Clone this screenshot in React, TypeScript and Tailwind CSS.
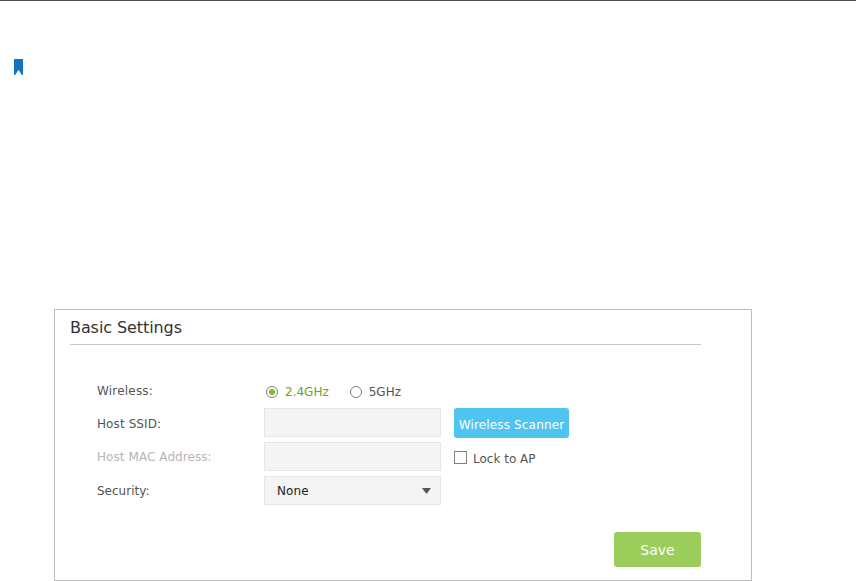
export default function App() {
  const font = { fontFamily: '"DejaVu Sans", Verdana, sans-serif' };
  return (
    <div style={font} className="h-[581px] w-[856px] overflow-hidden bg-white border-t border-[#4d4d4d]">
      <div className="pl-[14px] pt-[58px]">
        <svg width="9" height="16" viewBox="0 0 9 16" className="block">
          <path d="M0 0H9V16H8L4.5 11L1 16H0Z" fill="#0f74c4" />
        </svg>
      </div>
      <div className="ml-[54px] mt-[234px] h-[272px] w-[698px] border border-[#bdbdbd] pl-[15px] pt-[8px]">
        <div className="w-[631px] h-[27px] border-b border-[#c8c8c8] text-[16px] leading-[20px] tracking-[-0.08px] text-[#333333]">Basic Settings</div>
        <div className="mt-[34px] ml-[27px] flex flex-col text-[12px] text-[#555555]">
          <div className="flex h-[26px] items-center">
            <div className="w-[167px] pb-[2px] tracking-[0.2px]">Wireless:</div>
            <div className="flex items-center">
              <span className="ml-[2px] flex h-[12px] w-[12px] items-center justify-center rounded-full border border-[#808080]">
                <span className="h-[6px] w-[6px] rounded-full bg-[#7fba30]" />
              </span>
              <span className="ml-[7px] text-[#6aa51e]">2.4GHz</span>
              <span className="ml-[21px] h-[12px] w-[12px] rounded-full border border-[#808080]" />
              <span className="ml-[7px]">5GHz</span>
            </div>
          </div>
          <div className="flex h-[34px] items-center">
            <div className="w-[167px] pt-[4px] tracking-[0.1px]">Host SSID:</div>
            <div className="h-[29px] w-[177px] border border-[#e6e6e6] bg-[#f4f4f4]" />
            <button className="ml-[13px] mt-[1px] h-[30px] w-[115px] rounded-[3px] bg-[#4ec5f1] pt-[4px] text-[12px] tracking-[0.15px] text-white">Wireless Scanner</button>
          </div>
          <div className="flex h-[34px] items-center">
            <div className="w-[167px] pt-[2px] tracking-[0.07px] text-[#b5b5b5]">Host MAC Address:</div>
            <div className="h-[29px] w-[177px] border border-[#e6e6e6] bg-[#f4f4f4]" />
            <span className="ml-[13px] mt-[3px] h-[13px] w-[13px] border border-[#808080]" />
            <span className="ml-[6px] pt-[5px]">Lock to AP</span>
          </div>
          <div className="flex h-[34px] items-center">
            <div className="w-[167px] pt-[2px]">Security:</div>
            <div className="flex h-[29px] w-[177px] items-center justify-between border border-[#e6e6e6] bg-[#f4f4f4] pl-[12px] pr-[9px] tracking-[0.1px] text-[#222222]">
              <span className="pt-[2px]">None</span>
              <svg width="9" height="6" viewBox="0 0 9 6" className="mt-[2px]"><path d="M0 0H9L4.5 6Z" fill="#555555" /></svg>
            </div>
          </div>
        </div>
        <div className="mt-[25px] flex w-[631px] justify-end">
          <button className="h-[35px] w-[87px] rounded-[3px] bg-[#9acd5a] pt-[2px] text-[14px] text-white">Save</button>
        </div>
      </div>
    </div>
  );
}
